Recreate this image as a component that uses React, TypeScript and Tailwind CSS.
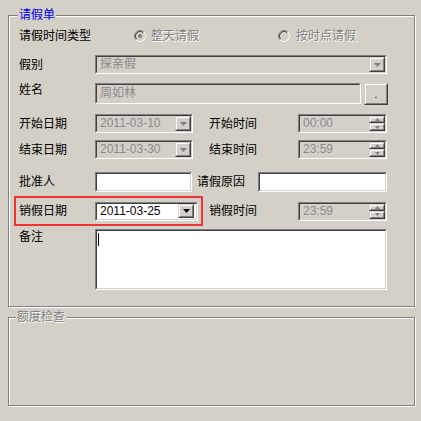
import React from "react";

function Sunken({ className, inner, children }: { className: string; inner: string; children?: React.ReactNode }) {
  return (
    <div className={`border border-t-[#808080] border-l-[#808080] border-r-white border-b-white ${className}`}>
      <div className={`h-full w-full border border-t-[#404040] border-l-[#404040] border-r-[#d4d0c8] border-b-[#d4d0c8] flex ${inner}`}>
        {children}
      </div>
    </div>
  );
}

function Raised({ className, children }: { className: string; children?: React.ReactNode }) {
  return (
    <div className={`border border-t-[#d4d0c8] border-l-[#d4d0c8] border-r-[#404040] border-b-[#404040] shrink-0 ${className}`}>
      <div className="h-full w-full border border-t-white border-l-white border-r-[#808080] border-b-[#808080] bg-[#d4d0c8] flex items-center justify-center">
        {children}
      </div>
    </div>
  );
}

function Arrow({ color, up }: { color: string; up?: boolean }) {
  return (
    <svg width="7" height="4" viewBox="0 0 7 4">
      {up ? <polygon points="0,4 7,4 3.5,0" fill={color} /> : <polygon points="0,0 7,0 3.5,4" fill={color} />}
    </svg>
  );
}

function SmallArrow({ up }: { up?: boolean }) {
  return (
    <svg width="5" height="3" viewBox="0 0 5 3">
      {up ? <polygon points="0,3 5,3 2.5,0" fill="#808080" /> : <polygon points="0,0 5,0 2.5,3" fill="#808080" />}
    </svg>
  );
}

function Radio({ checked }: { checked?: boolean }) {
  return (
    <svg width="12" height="12" viewBox="0 0 12 12" className="shrink-0">
      <circle cx="6" cy="6" r="5" fill="#d4d0c8" />
      <path d="M9.89 2.11 A5.5 5.5 0 0 0 2.11 9.89" stroke="#808080" fill="none" />
      <path d="M9.18 2.82 A4.5 4.5 0 0 0 2.82 9.18" stroke="#404040" fill="none" />
      <path d="M9.89 2.11 A5.5 5.5 0 0 1 2.11 9.89" stroke="#ffffff" fill="none" />
      <path d="M9.18 2.82 A4.5 4.5 0 0 1 2.82 9.18" stroke="#d4d0c8" fill="none" />
      {checked && <circle cx="6" cy="6" r="2" fill="#808080" />}
    </svg>
  );
}

function Combo({ className, text, enabled, btnClass }: { className: string; text: string; enabled?: boolean; btnClass: string }) {
  return (
    <Sunken className={className} inner={enabled ? "bg-white items-center" : "bg-[#d4d0c8] items-center"}>
      <span className={`flex-1 pl-[3px] leading-[15px] ${enabled ? "text-black" : "text-[#8a8a8a]"}`}>{text}</span>
      <Raised className={btnClass}>
        <Arrow color={enabled ? "#000000" : "#808080"} />
      </Raised>
    </Sunken>
  );
}

function TimeBox({ text }: { text: string }) {
  return (
    <Sunken className="w-[89px] h-[19px] shrink-0" inner="bg-[#d4d0c8] items-center">
      <span className="flex-1 pl-[3px] leading-[15px] text-[#8a8a8a]">{text}</span>
      <div className="flex flex-col w-[16px] h-[15px]">
        <Raised className="w-[16px] h-[7px]">
          <SmallArrow up />
        </Raised>
        <Raised className="w-[16px] h-[8px]">
          <SmallArrow />
        </Raised>
      </div>
    </Sunken>
  );
}

export default function App() {
  return (
    <div className="w-[421px] h-[421px] bg-[#d4d0c8] pt-[15px] pl-[8px] text-[12px] leading-[16px] text-black font-['Liberation_Sans','Noto_Sans_CJK_SC',sans-serif]">
      {/* group 1 */}
      <div className="relative w-[407px] h-[292px] border border-[#808080] shadow-[inset_1px_1px_0_#ffffff,1px_1px_0_#ffffff] pl-[10px] flex flex-col">
        <div className="absolute left-[9px] top-[-9px] px-[1px] bg-[#d4d0c8] text-[#0000ee] leading-[16px]">请假单</div>

        {/* row 1 radios */}
        <div className="mt-[12px] h-[16px] flex items-center">
          <span className="w-[115px] shrink-0">请假时间类型</span>
          <Radio checked />
          <span className="ml-[5px] text-[#808080] [text-shadow:1px_1px_0_#ffffff]">整天请假</span>
          <div className="ml-[79px]">
            <Radio />
          </div>
          <span className="ml-[6px] text-[#808080] [text-shadow:1px_1px_0_#ffffff]">按时点请假</span>
        </div>

        {/* row 2 */}
        <div className="mt-[11px] h-[19px] flex items-center">
          <span className="w-[76px] shrink-0">假别</span>
          <Combo className="w-[292px] h-[19px]" text="探亲假" btnClass="w-[16px] h-[15px]" />
        </div>

        {/* row 3 */}
        <div className="mt-[9px] h-[21px] flex items-start">
          <span className="w-[76px] shrink-0 leading-[12px] mt-[1px]">姓名</span>
          <Sunken className="w-[266px] h-[21px]" inner="bg-[#d4d0c8] items-center">
            <span className="pl-[3px] leading-[15px] text-[#8a8a8a]">周如林</span>
          </Sunken>
          <Raised className="ml-[3px] w-[24px] h-[22px]">
            <span className="leading-[10px] mt-[2px] text-[10px]">.</span>
          </Raised>
        </div>

        {/* row 4 */}
        <div className="mt-[10px] h-[19px] flex items-center">
          <span className="w-[76px] shrink-0">开始日期</span>
          <Combo className="w-[98px] h-[19px] shrink-0" text="2011-03-10" btnClass="w-[16px] h-[15px]" />
          <span className="ml-[16px] w-[89px] shrink-0">开始时间</span>
          <TimeBox text="00:00" />
        </div>

        {/* row 5 */}
        <div className="mt-[7px] h-[19px] flex items-center">
          <span className="w-[76px] shrink-0">结束日期</span>
          <Combo className="w-[98px] h-[19px] shrink-0" text="2011-03-30" btnClass="w-[16px] h-[15px]" />
          <span className="ml-[16px] w-[89px] shrink-0">结束时间</span>
          <TimeBox text="23:59" />
        </div>

        {/* row 6 */}
        <div className="mt-[13px] h-[20px] flex items-center">
          <span className="w-[76px] shrink-0">批准人</span>
          <Sunken className="w-[97px] h-[20px] shrink-0" inner="bg-white" />
          <span className="ml-[5px] w-[61px] shrink-0">请假原因</span>
          <Sunken className="w-[129px] h-[20px] shrink-0" inner="bg-white" />
        </div>

        {/* row 7 */}
        <div className="mt-[4px] h-[30px] flex items-center">
          <div className="ml-[-5px] w-[189px] h-[30px] border-2 border-[#ef3434] pl-[3px] flex items-center shrink-0">
            <span className="w-[76px] shrink-0">销假日期</span>
            <Sunken className="w-[103px] h-[19px] shrink-0" inner="bg-white items-center">
              <span className="flex-1 pl-[3px] leading-[15px] text-black">2011-03-25</span>
              <Raised className="w-[16px] h-[14px] mr-[2px]">
                <Arrow color="#000000" />
              </Raised>
            </Sunken>
          </div>
          <span className="ml-[6px] w-[89px] shrink-0">销假时间</span>
          <TimeBox text="23:59" />
        </div>

        {/* row 8 */}
        <div className="mt-[3px] h-[61px] flex items-start">
          <span className="w-[76px] shrink-0 mt-[0px]">备注</span>
          <Sunken className="w-[292px] h-[61px]" inner="bg-white items-start">
            <div className="ml-[1px] mt-[2px] w-[1px] h-[13px] bg-black" />
          </Sunken>
        </div>
      </div>

      {/* group 2 */}
      <div className="relative mt-[10px] w-[407px] h-[89px] border border-[#808080] shadow-[inset_1px_1px_0_#ffffff,1px_1px_0_#ffffff]">
        <div className="absolute left-[7px] top-[-9px] px-[1px] bg-[#d4d0c8] text-[#808080] [text-shadow:1px_1px_0_#ffffff] leading-[16px]">额度检查</div>
      </div>
    </div>
  );
}
